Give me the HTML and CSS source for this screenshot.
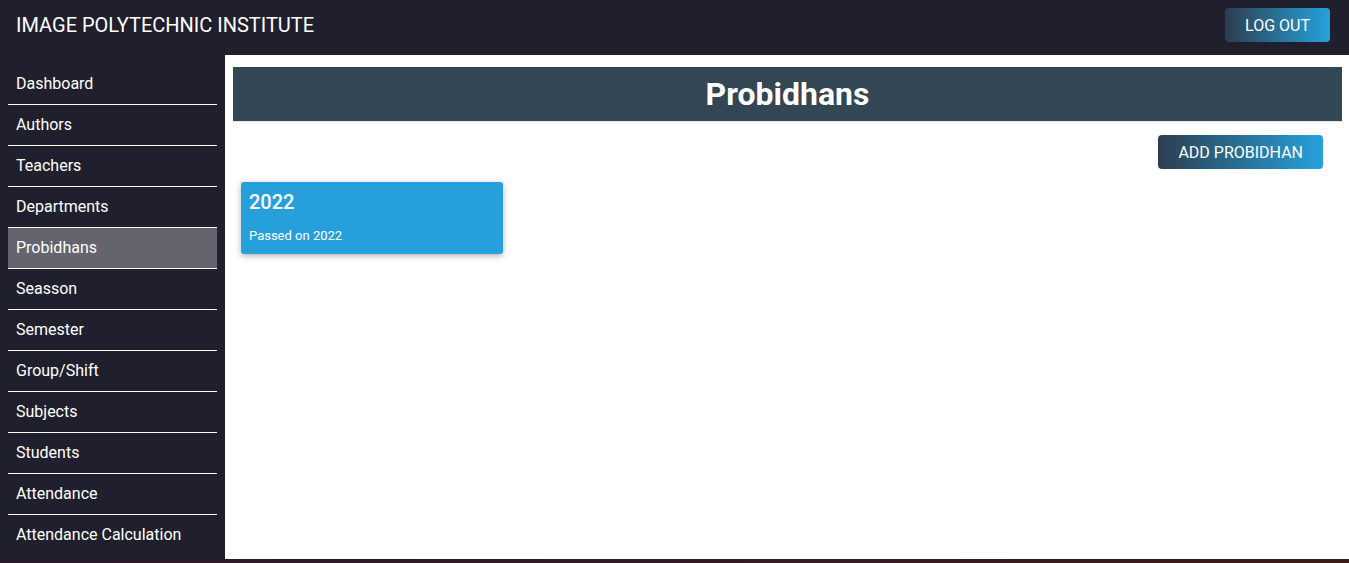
FILE: index.html
```html
<!DOCTYPE html>
<html>
<head>
<meta charset="utf-8">
<link rel="stylesheet" href="styles.css">
</head>
<body>
<header class="topbar">
  <div class="brand">IMAGE POLYTECHNIC INSTITUTE</div>
  <button class="btn">LOG OUT</button>
</header>
<div class="layout">
  <nav class="sidebar">
    <a class="nav-item">Dashboard</a>
    <a class="nav-item">Authors</a>
    <a class="nav-item">Teachers</a>
    <a class="nav-item">Departments</a>
    <a class="nav-item active">Probidhans</a>
    <a class="nav-item">Seasson</a>
    <a class="nav-item">Semester</a>
    <a class="nav-item">Group/Shift</a>
    <a class="nav-item">Subjects</a>
    <a class="nav-item">Students</a>
    <a class="nav-item">Attendance</a>
    <a class="nav-item last">Attendance Calculation</a>
  </nav>
  <main class="content">
    <h1 class="page-title">Probidhans</h1>
    <div class="actions">
      <button class="btn">ADD PROBIDHAN</button>
    </div>
    <div class="cards">
      <div class="card">
        <div class="card-title">2022</div>
        <div class="card-sub">Passed on 2022</div>
      </div>
    </div>
  </main>
</div>
</body>
</html>
```
FILE: styles.css
```css
* { box-sizing: border-box; }
html, body { margin: 0; height: 100%; }
body {
  font-family: Roboto, "Liberation Sans", sans-serif;
  background: linear-gradient(to right, #2a1a2c, #331a26 50%, #3e1c16);
  overflow: hidden;
}
.topbar {
  height: 55px;
  background: #1f1f2e;
  display: flex;
  align-items: center;
  justify-content: space-between;
  padding: 0 19px 0 16px;
}
.brand {
  color: #fff;
  font-size: 20px;
  margin-top: -6px;
}
.btn {
  font-family: Roboto, "Liberation Sans", sans-serif;
  font-size: 16px;
  color: #fff;
  border: none;
  border-radius: 4px;
  height: 34px;
  padding: 0 20px;
  background: linear-gradient(to right, #2c3e50, #25a2dc);
  cursor: pointer;
}
.topbar .btn { margin-top: -5px; }
.layout {
  display: flex;
  height: 504px;
}
.sidebar {
  width: 225px;
  flex: none;
  background: #1f1f2e;
  padding: 9px 8px 0 8px;
  display: flex;
  flex-direction: column;
  overflow: hidden;
}
.nav-item {
  display: flex;
  align-items: center;
  height: 41px;
  flex: none;
  padding: 0 8px 1px 8px;
  color: #fff;
  font-size: 16px;
  border-bottom: 1px solid #fff;
}
.nav-item.last { border-bottom-color: transparent; }
.nav-item.active { background: #64646e; }
.content {
  flex: 1;
  background: #fff;
  padding: 12px 7px 0 8px;
}
.page-title {
  margin: 0;
  height: 55px;
  background: #324653;
  color: #fff;
  font-size: 32px;
  font-weight: 700;
  text-align: center;
  line-height: 54px;
  border-bottom: 1px solid #dfe6ea;
}
.actions {
  display: flex;
  justify-content: flex-end;
  padding: 13px 19px 0 0;
}
.cards {
  display: flex;
  padding: 13px 8px;
}
.card {
  width: 262px;
  height: 72px;
  background: #26a0da;
  border-radius: 3px;
  box-shadow: 0 2px 6px rgba(0,0,0,0.3);
  color: #fff;
  padding: 9px 8px;
}
.card-title {
  font-size: 20px;
  font-weight: 500;
  line-height: 23px;
}
.card-sub {
  font-size: 13px;
  margin-top: 14px;
}
```
